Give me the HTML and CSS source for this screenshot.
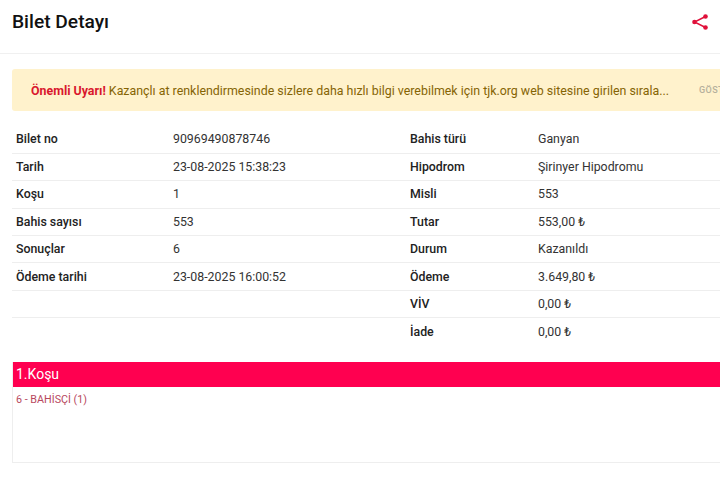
FILE: index.html
```html
<!DOCTYPE html>
<html lang="tr">
<head>
<meta charset="utf-8">
<title>Bilet Detayı</title>
<link rel="stylesheet" href="styles.css">
</head>
<body>
<div class="page">
  <header class="topbar">
    <h1 class="title">Bilet Detayı</h1>
    <svg class="share" viewBox="0 0 18 18" width="18" height="18" aria-hidden="true">
      <path d="M14.5 3.5 3.5 9l11 5.5" fill="none" stroke="#e0103a" stroke-width="1.4"/>
      <circle cx="14.5" cy="3.5" r="2.3" fill="#e0103a"/>
      <circle cx="3.5" cy="9" r="2.3" fill="#e0103a"/>
      <circle cx="14.5" cy="14.5" r="2.3" fill="#e0103a"/>
    </svg>
  </header>
  <div class="alert">
    <p class="alert-text"><strong class="alert-strong">Önemli Uyarı!</strong> Kazançlı at renklendirmesinde sizlere daha hızlı bilgi verebilmek için tjk.org web sitesine girilen sırala...</p>
    <span class="alert-action">GÖSTER</span>
  </div>
  <table class="details">
    <colgroup>
      <col class="c1"><col class="c2"><col class="c3"><col class="c4">
    </colgroup>
    <tbody>
      <tr><th>Bilet no</th><td>90969490878746</td><th>Bahis türü</th><td>Ganyan</td></tr>
      <tr><th>Tarih</th><td>23-08-2025 15:38:23</td><th>Hipodrom</th><td>Şirinyer Hipodromu</td></tr>
      <tr><th>Koşu</th><td>1</td><th>Misli</th><td>553</td></tr>
      <tr><th>Bahis sayısı</th><td>553</td><th>Tutar</th><td>553,00 ₺</td></tr>
      <tr><th>Sonuçlar</th><td>6</td><th>Durum</th><td>Kazanıldı</td></tr>
      <tr><th>Ödeme tarihi</th><td>23-08-2025 16:00:52</td><th>Ödeme</th><td>3.649,80 ₺</td></tr>
      <tr><th></th><td></td><th>VİV</th><td>0,00 ₺</td></tr>
      <tr class="last"><th></th><td></td><th>İade</th><td>0,00 ₺</td></tr>
    </tbody>
  </table>
  <section class="race">
    <h2 class="race-head">1.Koşu</h2>
    <div class="race-body">6 - BAHİSÇİ (1)</div>
  </section>
</div>
</body>
</html>
```

FILE: styles.css
```css
* { box-sizing: border-box; }
html, body { margin: 0; padding: 0; background: #fff; overflow: hidden; }
body { width: 720px; height: 493px; font-family: Roboto, "Liberation Sans", sans-serif; }
.page { width: 760px; }
.topbar {
  display: flex; align-items: center; justify-content: space-between;
  height: 54px; padding: 0 51px 10px 12px;
  border-bottom: 1px solid #f0f0f0;
}
.title { margin: 0; font-size: 19.2px; font-weight: 500; line-height: 30px; color: #111; }
.share { display: block; }
.alert {
  display: flex; align-items: center;
  height: 42px; margin: 15px 0 0 12px; padding-left: 19px;
  background: #fff2cc; border-radius: 3px 0 0 3px;
}
.alert-text { margin: 0; width: 668px; flex: none; font-size: 12.4px; color: #856404; white-space: nowrap; overflow: hidden; }
.alert-strong { color: #d9182d; font-weight: 700; }
.alert-action { font-size: 9px; font-weight: 500; color: #b5b09c; letter-spacing: .4px; white-space: nowrap; }
.details { table-layout: fixed; width: 748px; margin: 15px 0 0 12px; border-collapse: collapse; font-size: 12.35px; color: #333; }
.c1 { width: 157px; } .c2 { width: 237px; } .c3 { width: 128px; }
.details th, .details td { height: 27.4px; padding: 0 4px; text-align: left; border-bottom: 1px solid #eee; line-height: 14px; }
.details th { font-weight: 500; color: #222; }
.last th, .last td { border-bottom: 0; }
.race { margin: 16.8px 0 0 12px; border: 1px solid #eee; border-top: 0; border-right: 0; height: 101px; }
.race-head { margin: 0; height: 25px; padding: 0 3px; background: #ff0050; color: #fff; font-size: 14px; font-weight: 400; line-height: 24px; }
.race-body { padding: 6px 3px; font-size: 10.75px; line-height: 14px; color: #b8485e; }
```
